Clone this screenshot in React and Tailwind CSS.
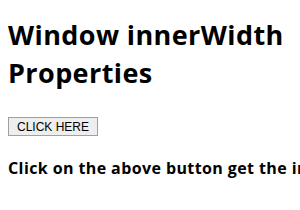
export default function App() {
  return (
    <div className="min-h-screen overflow-hidden bg-white px-2 font-['Open_Sans',sans-serif] text-black">
      <h1 className="pt-[16px] text-[27px] font-bold leading-[38px] tracking-[0.4px]">
        Window innerWidth Properties
      </h1>
      <button className="mt-[25px] h-[19px] w-[90px] border border-[#a0a0a0] bg-[#eeeeee] font-['Liberation_Sans',sans-serif] text-[12px] leading-none text-black">
        CLICK HERE
      </button>
      <p className="mt-[21px] whitespace-nowrap text-[16px] font-bold leading-[20px] tracking-[0.4px]">
        Click on the above button get the innerWidth
      </p>
    </div>
  );
}
